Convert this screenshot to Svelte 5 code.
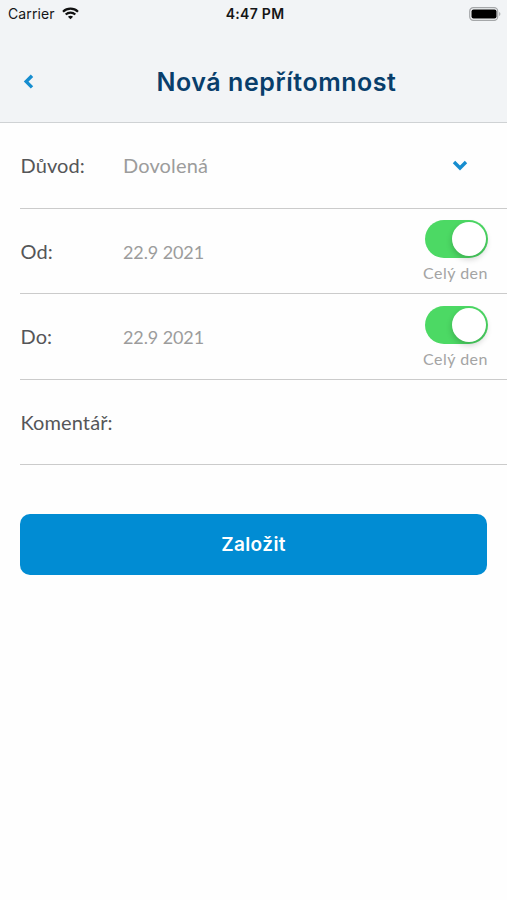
<script>
    let reason = $state('Dovolená');
    let days = $state([
        {label: 'Od:', date: '22.9 2021', allDay: true},
        {label: 'Do:', date: '22.9 2021', allDay: true}
    ]);
</script>

<div class="screen">
    <header>
        <div class="status">
            <div class="carrier">
                <span>Carrier</span>
                <svg width="17" height="13" viewBox="0 0 17 13" fill="none" stroke="#111" stroke-width="2.2">
                    <path d="M1 4.7C5.2.7 11.8.7 16 4.7" />
                    <path d="M3.7 7.5C6.4 4.9 10.6 4.9 13.3 7.5" />
                    <path d="M8.5 12.3 5.9 9.7C7.3 8.3 9.7 8.3 11.1 9.7Z" fill="#111" stroke="none" />
                </svg>
            </div>
            <span class="time">4:47 PM</span>
            <svg class="battery" width="32" height="14" viewBox="0 0 32 14">
                <rect x=".7" y=".7" width="28" height="12.6" rx="3.6" fill="none" stroke="#a5a7a9" stroke-width="1.2" />
                <rect x="2.5" y="2.5" width="25" height="9" rx="2" fill="#000" />
                <path d="M30.2 5v4c1.6-.7 1.6-3.3 0-4Z" fill="#a5a7a9" />
            </svg>
        </div>
        <div class="bar">
            <button class="back" aria-label="Zpět">
                <svg width="14" height="16" viewBox="0 0 14 16" fill="none" stroke="#168dcf" stroke-width="3.4">
                    <path d="M10 1.8 4.2 7.6l5.8 5.8" />
                </svg>
            </button>
            <h1>Nová nepřítomnost</h1>
        </div>
    </header>

    <div class="row">
        <span class="label">Důvod:</span>
        <span class="value">{reason}</span>
        <svg class="arrow" width="16" height="12" viewBox="0 0 16 12" fill="none" stroke="#168dcf" stroke-width="3.4">
            <path d="M2 3l6 6 6-6" />
        </svg>
    </div>
    {#each days as day}
        <div class="row">
            <span class="label">{day.label}</span>
            <span class="value date">{day.date}</span>
            <div class="all-day">
                <button class="switch" class:on={day.allDay} aria-label="Celý den" onclick={() => day.allDay = !day.allDay}>
                    <span class="knob"></span>
                </button>
                <span>Celý den</span>
            </div>
        </div>
    {/each}
    <div class="row">
        <span class="label">Komentář:</span>
    </div>

    <button class="submit">Založit</button>
</div>

<style>
    :global(body) {
        margin: 0;
        background: #fefefe;
    }

    .screen {
        min-height: 900px;
        color: #555658;
        font-family: Lato, "Open Sans", sans-serif;
    }

    header {
        box-sizing: border-box;
        height: 123px;
        background: #f2f4f6;
        border-bottom: 1px solid #cfd2d4;
    }

    .status {
        display: grid;
        grid-template-columns: 1fr auto 1fr;
        align-items: center;
        height: 27px;
        padding: 0 6px 0 8px;
        color: #151617;
        font-family: Inter, sans-serif;
        font-size: 14px;
    }

    .carrier {
        display: flex;
        align-items: center;
        gap: 7px;
        letter-spacing: 0.1px;
    }

    .time {
        padding-left: 1px;
        font-weight: 600;
        letter-spacing: 0.3px;
    }

    .battery {
        justify-self: end;
    }

    svg {
        display: block;
    }

    .bar {
        display: grid;
        grid-template-columns: 46px 1fr;
        align-items: center;
        height: 109px;
    }

    .back {
        padding: 0 0 0 22px;
        border: none;
        background: none;
    }

    h1 {
        margin: 0;
        color: #083e6b;
        font-family: Inter, sans-serif;
        font-size: 25px;
        font-weight: 600;
        letter-spacing: 0.55px;
        text-align: center;
    }

    .row {
        box-sizing: border-box;
        display: flex;
        align-items: center;
        height: 85.5px;
        margin-left: 20px;
        padding-right: 19px;
        border-bottom: 1px solid #cbcbcb;
        font-size: 20px;
    }

    .label {
        width: 102.5px;
        padding-left: 0.5px;
        letter-spacing: 0.1px;
    }

    .value {
        flex: 1;
        color: #9c9c9c;
        letter-spacing: 0.15px;
    }

    .date {
        padding-top: 2px;
        font-size: 18px;
        letter-spacing: -0.1px;
    }

    .arrow {
        margin-right: 20px;
    }

    .all-day {
        display: flex;
        flex-direction: column;
        align-items: flex-end;
        gap: 5px;
        padding-top: 2px;
        color: #a4a4a4;
        font-size: 16px;
        letter-spacing: 0.5px;
        line-height: 20px;
    }

    .switch {
        width: 63px;
        height: 38px;
        padding: 2px;
        border: none;
        border-radius: 19px;
        background: #dedede;
    }

    .switch.on {
        background: #4cd964;
    }

    .knob {
        display: block;
        width: 34px;
        height: 34px;
        border-radius: 50%;
        background: #fff;
        box-shadow: 0 3px 6px rgba(0, 0, 0, 0.2);
    }

    .on .knob {
        margin-left: auto;
    }

    .submit {
        display: block;
        width: 467px;
        height: 61px;
        margin: 49px 20px 0;
        border: none;
        border-radius: 10px;
        background: #018cd3;
        color: #fff;
        font-family: Inter, sans-serif;
        font-size: 19px;
        font-weight: 600;
        letter-spacing: 0.4px;
    }
</style>
